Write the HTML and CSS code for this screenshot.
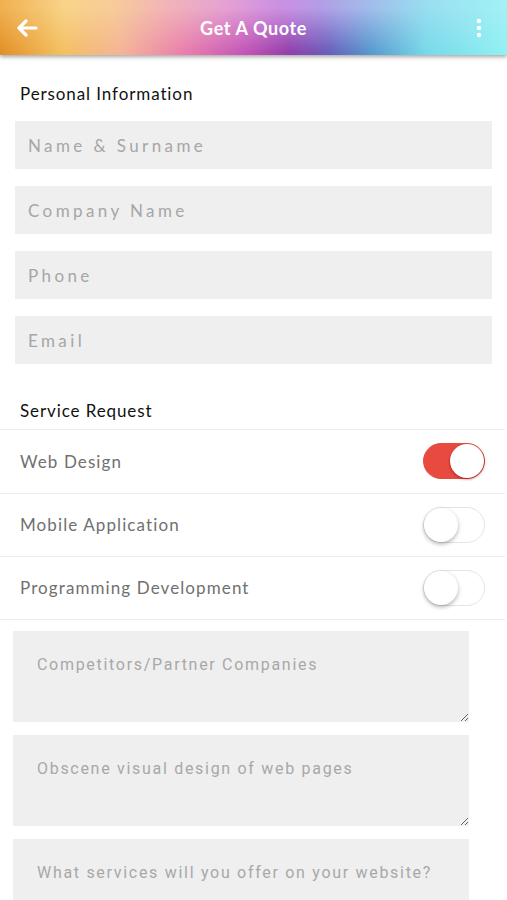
FILE: index.html
```html
<!doctype html>
<html lang="en">
<head>
  <meta charset="UTF-8">
  <title>Get A Quote</title>
  <link rel="stylesheet" href="styles.css">
</head>
<body>
  <div class="topbar">
    <svg class="back" width="22" height="18" viewBox="0 0 22 18"><path d="M20 9H4M10 2L3 9l7 7" fill="none" stroke="#fff" stroke-width="3.2" stroke-linecap="round" stroke-linejoin="round"/></svg>
    <h1 class="title">Get A Quote</h1>
    <svg class="more" width="6" height="20" viewBox="0 0 6 20"><circle cx="3" cy="3" r="2.2" fill="#fff"/><circle cx="3" cy="10" r="2.2" fill="#fff"/><circle cx="3" cy="17" r="2.2" fill="#fff"/></svg>
  </div>

  <div class="section">
    <h2 class="heading">Personal Information</h2>
    <div class="fields">
      <input class="field" type="text" placeholder="Name &amp; Surname">
      <input class="field" type="text" placeholder="Company Name">
      <input class="field" type="text" placeholder="Phone">
      <input class="field" type="text" placeholder="Email">
    </div>
  </div>

  <h2 class="heading service">Service Request</h2>
  <ul class="options">
    <li><span>Web Design</span><label class="switch on"><i></i></label></li>
    <li><span>Mobile Application</span><label class="switch"><i></i></label></li>
    <li><span>Programming Development</span><label class="switch"><i></i></label></li>
  </ul>

  <div class="notes">
    <textarea class="note" placeholder="Competitors/Partner Companies"></textarea>
    <textarea class="note" placeholder="Obscene visual design of web pages"></textarea>
    <textarea class="note" placeholder="What services will you offer on your website?"></textarea>
  </div>
</body>
</html>
```

FILE: styles.css
```css
*{margin:0;
  padding:0;
  list-style:none;
  box-sizing:border-box;}
body{background:#fff;
     font-family:Lato, "Open Sans", sans-serif;
     overflow:hidden;}
.topbar{height:55px;
        display:flex;
        align-items:center;
        justify-content:space-between;
        padding:0 25px 0 16px;
        position:relative;
        background:linear-gradient(90deg, #f0b050 0%, #f8d48a 13%, #f8cc98 22%, #f2b4b8 33%, #e4a0d4 45%, #cc90e2 55%, #b49ce6 63%, #a2baea 72%, #98def0 84%, #a2f2f6 100%);
        box-shadow:0 2px 4px rgba(0,0,0,.35);}
/* saturated lower half of the header */
.topbar:before{content:"";
               position:absolute;
               top:0; left:0; right:0; bottom:0;
               background:linear-gradient(90deg, #e08a20 0%, #f2bc58 12%, #f4b098 24%, #e878a8 36%, #c04ab0 48%, #8a30a0 57%, #5a54b4 65%, #4a92c8 73%, #72d8e8 84%, #90f0f2 100%);
               -webkit-mask-image:linear-gradient(180deg, transparent 15%, rgba(0,0,0,.85) 95%);
               mask-image:linear-gradient(180deg, transparent 15%, rgba(0,0,0,.85) 95%);}
.topbar svg{position:relative;}
.topbar .title{position:absolute;
               left:0; right:0;
               text-align:center;
               color:#fff;
               font-size:18px;
               font-weight:700;
               letter-spacing:.6px;
               pointer-events:none;}
.back{display:block;}
.more{display:block;}
.section{padding-top:28px;}
.heading{font-size:17px;
         font-weight:400;
         color:#111;
         padding-left:20px;
         line-height:22px;
         letter-spacing:.9px;}
.fields{display:flex;
        flex-direction:column;
        gap:17px;
        padding:16px 15px 0 15px;}
.field{height:48px;
       width:477px;
       border:none;
       outline:none;
       background:#efefef;
       padding:0 13px;
       font-family:Lato, sans-serif;
       font-size:17px;
       letter-spacing:3.4px;}
.field::placeholder{color:#a6a6a6;}
.heading.service{margin-top:36px;}
.options{margin-top:7px;
         width:505px;}
.options li{height:63.5px;
            display:flex;
            align-items:center;
            justify-content:space-between;
            padding:0 20px;
            border-top:1px solid #ececec;
            font-size:17px;
            letter-spacing:1.1px;
            color:#707070;}
.options li:last-child{border-bottom:1px solid #ececec;}
.switch{width:62px;
        height:36px;
        border-radius:18px;
        background:#fff;
        border:1px solid #e4e4e4;
        position:relative;}
.switch i{position:absolute;
          top:0; left:0;
          width:34px; height:34px;
          border-radius:50%;
          background:#fff;
          box-shadow:0 2px 4px rgba(0,0,0,.3);}
.switch.on{background:#e84a40;
           border-color:#e84a40;}
.switch.on i{left:26px;
             box-shadow:0 1px 3px rgba(120,0,0,.6);}
.notes{display:flex;
       flex-direction:column;
       gap:13px;
       padding:11px 0 0 13px;}
.note{width:456px;
      height:91px;
      border:none;
      outline:none;
      background:#efefef;
      padding:24px 24px 20px;
      font-family:Roboto, sans-serif;
      font-size:16px;
      letter-spacing:1.7px;
      resize:vertical;}
.note::placeholder{color:#a8a8a8;}
```
